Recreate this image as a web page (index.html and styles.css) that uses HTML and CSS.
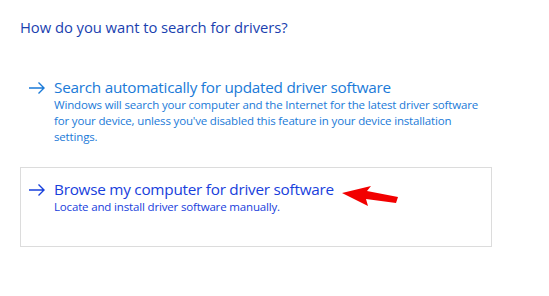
FILE: index.html
```html
<!DOCTYPE html>
<html>
<head>
<meta charset="utf-8">
<link rel="stylesheet" href="styles.css">
</head>
<body>
<div class="page">
  <h1 class="title">How do you want to search for drivers?</h1>
  <div class="option">
    <svg class="arrow" width="16" height="12" viewBox="0 0 16 12"><path d="M0 6H15M9.5 0.5L15 6L9.5 11.5" fill="none" stroke="currentColor" stroke-width="1.4"/></svg>
    <div class="text">
      <div class="head">Search automatically for updated driver software</div>
      <div class="desc">Windows will search your computer and the Internet for the latest driver software for your device, unless you've disabled this feature in your device installation settings.</div>
    </div>
  </div>
  <div class="option hover">
    <svg class="arrow" width="16" height="12" viewBox="0 0 16 12"><path d="M0 6H15M9.5 0.5L15 6L9.5 11.5" fill="none" stroke="currentColor" stroke-width="1.4"/></svg>
    <div class="text">
      <div class="head">Browse my computer for driver software</div>
      <div class="desc">Locate and install driver software manually.</div>
    </div>
    <svg class="red" width="60" height="30" viewBox="0 0 60 30"><path d="M1 13 L30 6 L26 11 L57 17 L55 23 L25 19 L27 26 Z" fill="#f20000"/></svg>
  </div>
</div>
</body>
</html>
```
FILE: styles.css
```css
html, body { margin: 0; padding: 0; background: #fff; }
body { font-family: "Open Sans", "Noto Sans", sans-serif; }
.page { width: 472px; padding: 17px 20px 0 20px; }
.title { margin: 0; font-size: 14.8px; font-weight: 400; color: #1a3fb0; line-height: 20px; letter-spacing: -0.05px; }
.option { display: flex; align-items: flex-start; gap: 9px; padding: 11px 8px 10px 8px; height: 57px; border: 1px solid transparent; position: relative; color: #1a7ad8; }
.title + .option { margin-top: 28px; }
.option + .option { margin-top: 22px; }
.hover { border-color: #dcdcdc; color: #1840dc; }
.arrow { flex: none; margin-top: 5px; }
.head { font-size: 15.3px; line-height: 20px; letter-spacing: -0.25px; }
.desc { font-size: 11.5px; line-height: 16px; width: 440px; letter-spacing: -0.16px; }
.red { position: absolute; left: 320px; top: 12px; }
```
